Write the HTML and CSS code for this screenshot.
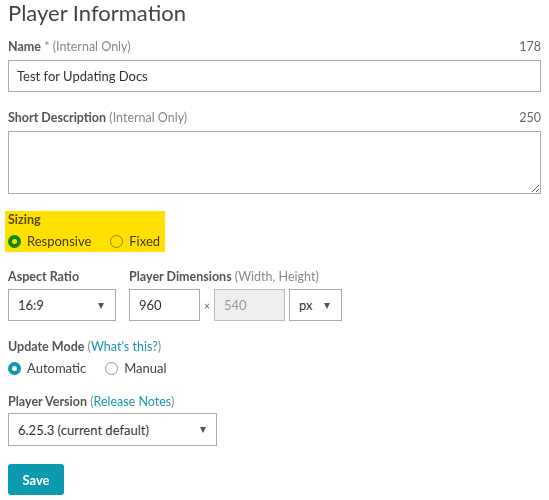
FILE: index.html
```html
<!DOCTYPE html>
<html>
<head>
<meta charset="utf-8">
<link rel="stylesheet" href="styles.css">
</head>
<body>
<div class="page">
  <h1 class="title">Player Information</h1>

  <div class="field">
    <div class="label-row">
      <span class="label"><b>Name</b> <span class="req">*</span> <span class="hint">(Internal Only)</span></span>
      <span class="count">178</span>
    </div>
    <input class="text-input full" type="text" value="Test for Updating Docs">
  </div>

  <div class="field">
    <div class="label-row">
      <span class="label"><b>Short Description</b> <span class="hint">(Internal Only)</span></span>
      <span class="count">250</span>
    </div>
    <textarea class="text-area"></textarea>
  </div>

  <div class="field sizing">
    <div class="label"><b>Sizing</b></div>
    <div class="radio-row">
      <span class="radio-item"><span class="radio checked"></span>Responsive</span>
      <span class="radio-item"><span class="radio"></span>Fixed</span>
    </div>
    <div class="highlight"></div>
  </div>

  <div class="field dims">
    <div class="col">
      <div class="label"><b>Aspect Ratio</b></div>
      <div class="select aspect"><span>16:9</span></div>
    </div>
    <div class="col">
      <div class="label"><b>Player Dimensions</b> <span class="hint">(Width, Height)</span></div>
      <div class="dim-row">
        <input class="text-input num" type="text" value="960">
        <span class="times">×</span>
        <input class="text-input num disabled" type="text" value="540" disabled>
        <div class="select unit"><span>px</span></div>
      </div>
    </div>
  </div>

  <div class="field">
    <div class="label"><b>Update Mode</b> <span class="hint">(<a class="link">What's this?</a>)</span></div>
    <div class="radio-row">
      <span class="radio-item"><span class="radio checked"></span>Automatic</span>
      <span class="radio-item"><span class="radio"></span>Manual</span>
    </div>
  </div>

  <div class="field version">
    <div class="label"><b>Player Version</b> <span class="hint">(<a class="link">Release Notes</a>)</span></div>
    <div class="select ver"><span>6.25.3 (current default)</span></div>
  </div>

  <button class="save">Save</button>
</div>
</body>
</html>
```

FILE: styles.css
```css
* { box-sizing: border-box; }
html, body { margin: 0; padding: 0; background: #fff; }
body {
  font-family: Lato, "Open Sans", sans-serif;
  color: #444;
  font-size: 12.5px;
}
.page { padding: 0 8px; width: 549px; }
.title {
  margin: 0;
  font-size: 22px;
  line-height: 26px;
  font-weight: 400;
  color: #444;
}
.field { margin-top: 13px; }
.label-row {
  display: flex;
  justify-content: space-between;
  line-height: 16px;
}
.label { line-height: 16px; color: #555; font-size: 12.5px; }
.label b { font-weight: 700; color: #555; }
.req { color: #888; }
.hint { color: #888; }
.count { color: #666; font-size: 12.5px; }
.link { color: #1698ae; text-decoration: none; }

.text-input {
  display: block;
  height: 32px;
  border: 1px solid #aaa;
  border-radius: 0;
  padding: 0 8px;
  font-family: Lato, sans-serif;
  font-size: 13px;
  color: #333;
  background: #fff;
  outline: none;
}
.full { width: 100%; margin-top: 5px; }
.text-area {
  display: block;
  width: 100%;
  height: 63px;
  margin-top: 5px;
  border: 1px solid #aaa;
  resize: vertical;
  font-family: Lato, sans-serif;
  font-size: 13px;
  outline: none;
}
.field + .field { margin-top: 18px; }
.sizing { position: relative; margin-top: 18px; padding-bottom: 2px; }
.radio-row {
  display: flex;
  gap: 19px;
  height: 18px;
  line-height: 18px;
  margin-top: 4px;
  font-size: 13px;
  color: #444;
}
.radio-item { display: inline-flex; align-items: center; }
.radio {
  display: inline-block;
  width: 13px;
  height: 13px;
  border-radius: 50%;
  border: 1px solid #999;
  background: #fff;
  margin-right: 6px;
}
.radio.checked { border: 4px solid #0b9ab0; }
.highlight {
  position: absolute;
  left: -3px;
  top: -1px;
  width: 160px;
  height: 41px;
  background: #ffe000;
  mix-blend-mode: multiply;
  pointer-events: none;
}
.field.dims { display: flex; gap: 13px; margin-top: 17px; }
.col .label { margin-bottom: 4px; }
.select {
  position: relative;
  height: 32px;
  border: 1px solid #aaa;
  display: flex;
  align-items: center;
  padding: 0 9px;
  font-size: 13px;
  color: #333;
  background: #fff;
}
.select::after {
  content: "";
  position: absolute;
  right: 11px;
  top: 13px;
  border-left: 3px solid transparent;
  border-right: 3px solid transparent;
  border-top: 6px solid #555;
}
.aspect { width: 108px; }
.dim-row { display: flex; align-items: center; }
.num { width: 71px; padding: 0 9px; }
.times { width: 14px; text-align: center; font-size: 11px; color: #666; }
.disabled { background: #eee; color: #999; border-color: #bbb; }
.unit { width: 53px; margin-left: 4px; }
.field.version { margin-top: 17px; }
.version .label { margin-bottom: 3px; }
.ver { width: 209px; height: 33px; }
.ver::after { right: 10px; }
.save {
  display: block;
  margin-top: 18px;
  width: 56px;
  height: 31px;
  border: none;
  border-radius: 3px;
  background: #0b9ab0;
  color: #fff;
  font-family: Lato, sans-serif;
  font-weight: 700;
  font-size: 13px;
  padding: 0;
}
```
